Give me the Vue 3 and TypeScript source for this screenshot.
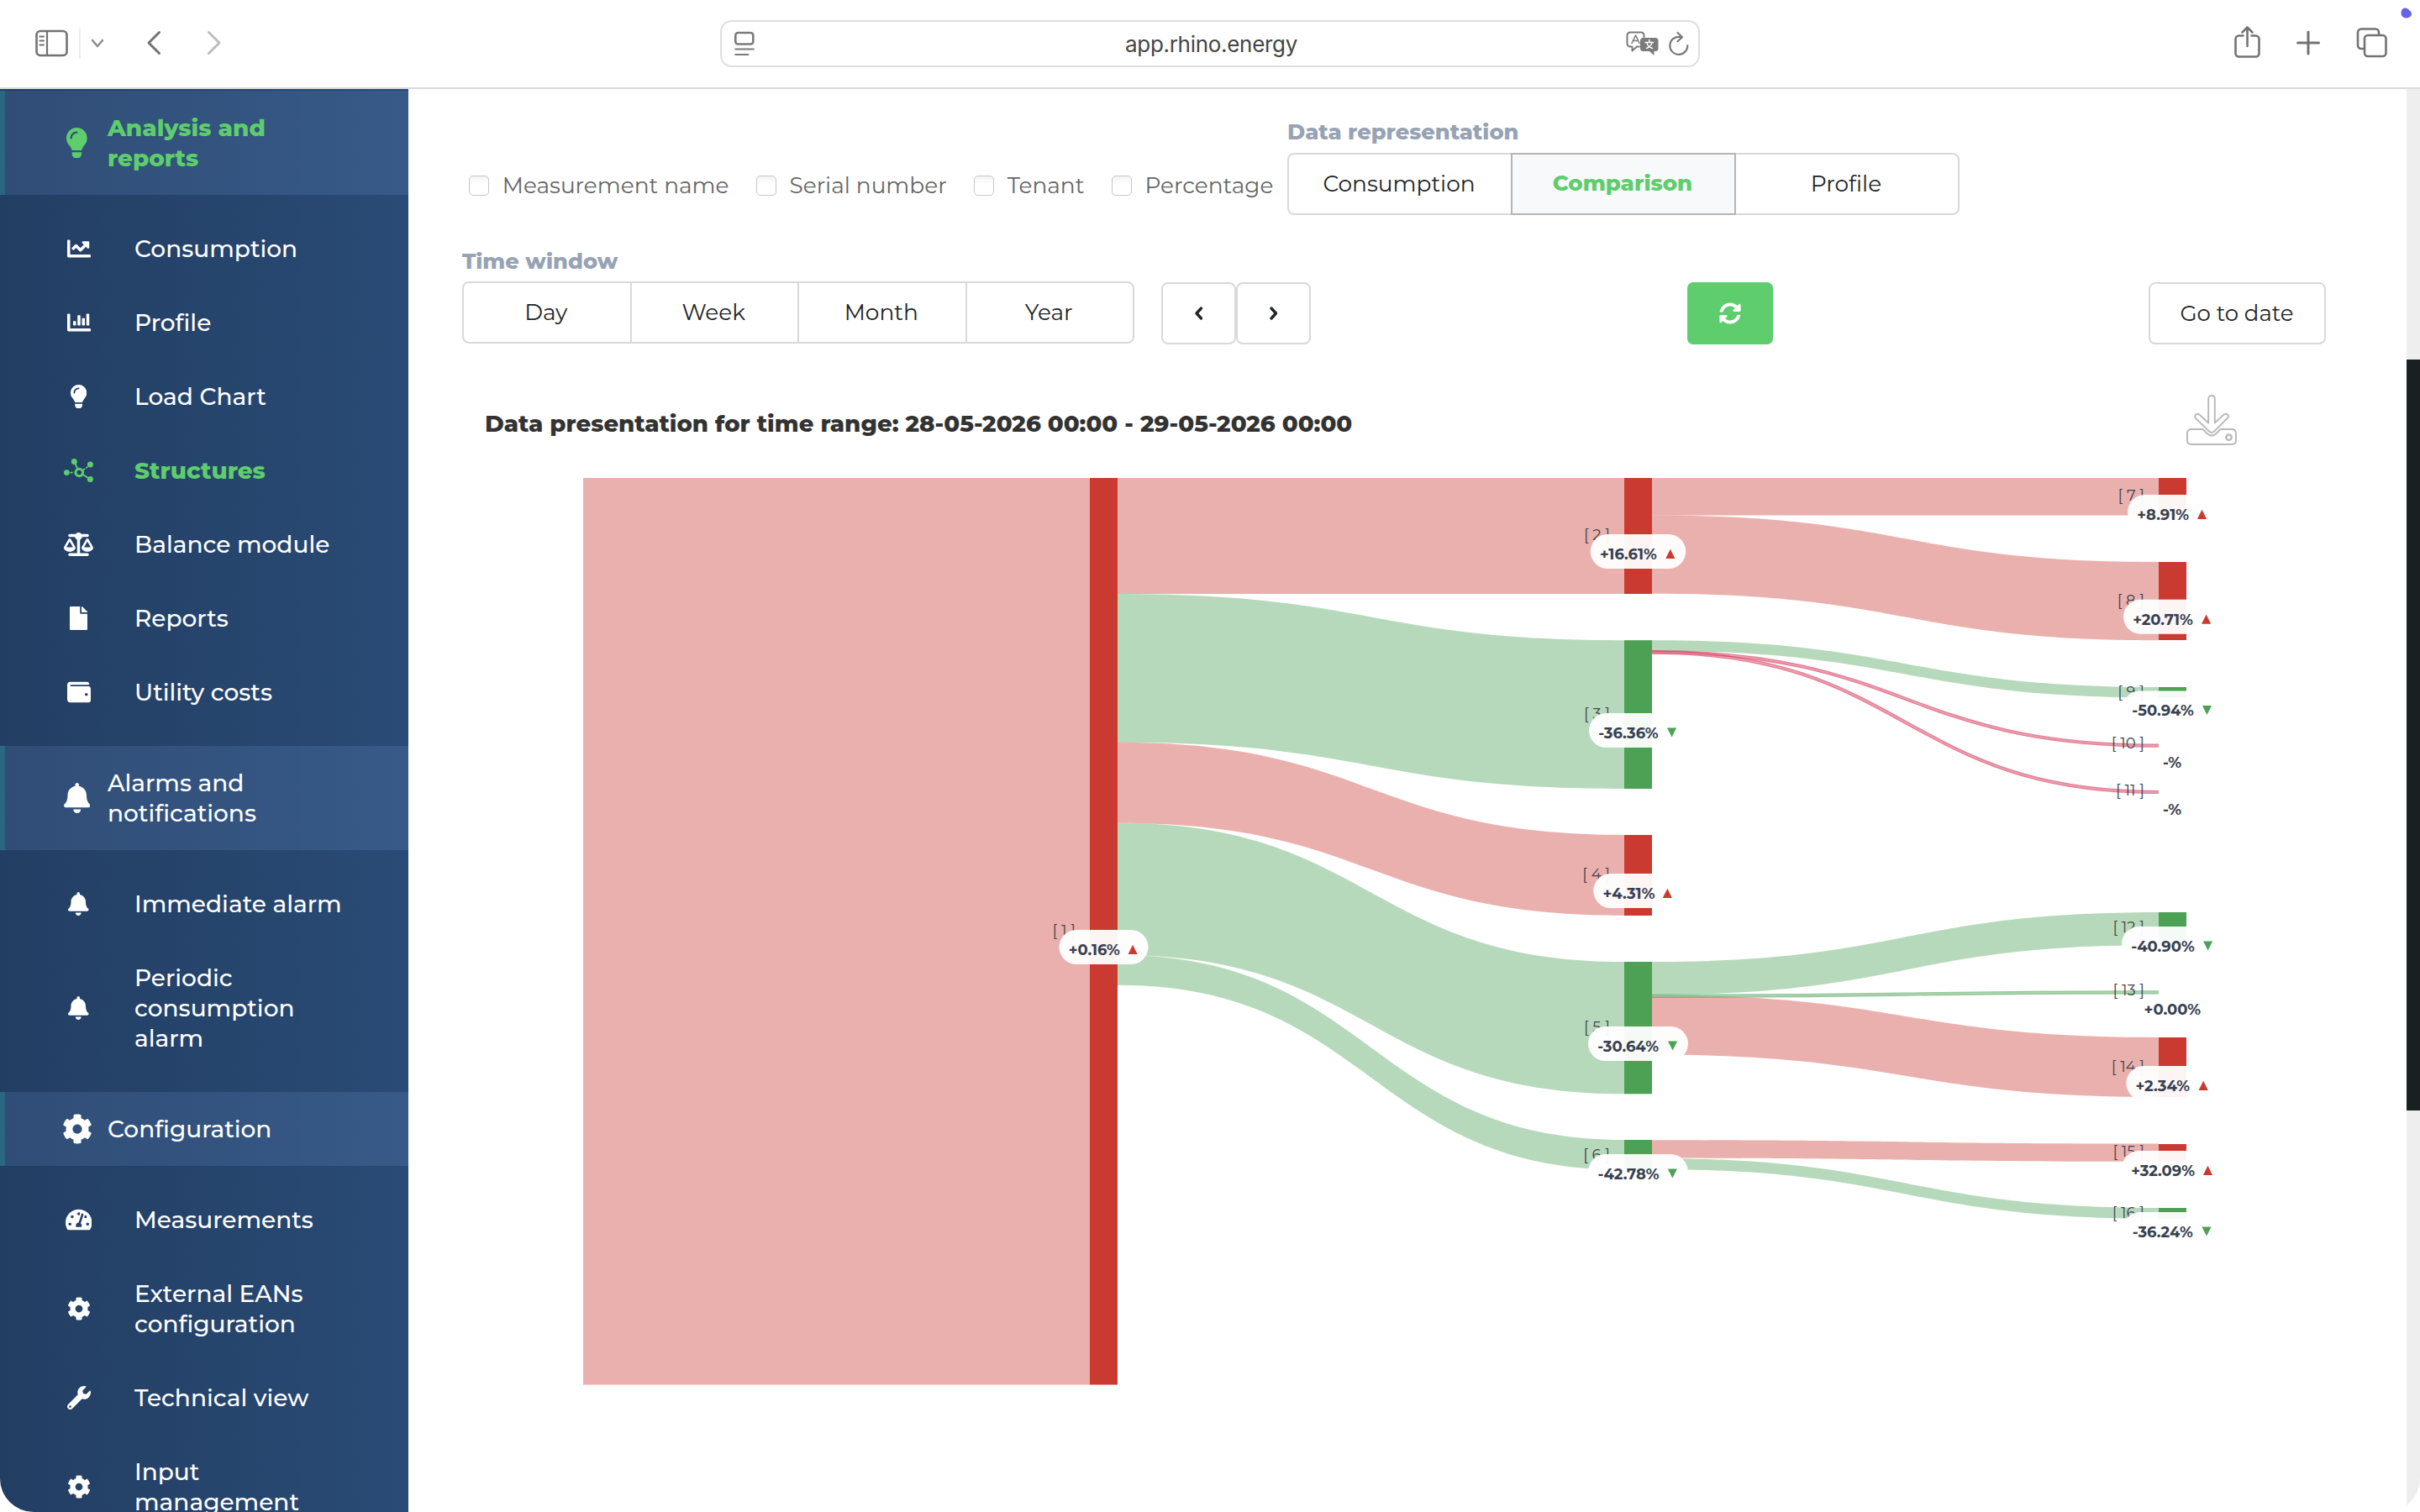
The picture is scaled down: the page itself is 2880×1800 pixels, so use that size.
<script setup lang="ts">
interface Glyph { w: number; d: string }
interface Item { icon: string; lines: string[]; active?: boolean }
interface Section { head: Item; items: Item[] }

// Spreads a label's letters so that it fills the given width.
const vFit = {
  mounted(el: HTMLElement, binding: { value: number }) {
    const n = (el.textContent ?? '').trim().length
    const w = el.getBoundingClientRect().width
    if (n > 0) el.style.letterSpacing = `${(binding.value - w) / n}px`
  },
}

const icons: Record<string, Glyph> = {
  line: { w: 512, d: 'M496 384H64V80c0-8.84-7.16-16-16-16H16C7.16 64 0 71.16 0 80v336c0 17.67 14.33 32 32 32h464c8.84 0 16-7.16 16-16v-32c0-8.84-7.16-16-16-16zM464 96H345.94c-21.38 0-32.09 25.85-16.97 40.97l32.4 32.4L288 242.75l-73.37-73.37c-12.5-12.5-32.76-12.5-45.25 0l-68.69 68.69c-6.25 6.25-6.25 16.38 0 22.63l22.62 22.62c6.25 6.25 16.38 6.25 22.63 0L192 237.25l73.37 73.37c12.5 12.5 32.76 12.5 45.25 0l96-96 32.4 32.4c15.12 15.12 40.97 4.41 40.97-16.97V112c.01-8.84-7.15-16-15.99-16z' },
  bars: { w: 512, d: 'M332.8 320h38.4c6.4 0 12.8-6.4 12.8-12.8V172.8c0-6.4-6.4-12.8-12.8-12.8h-38.4c-6.4 0-12.8 6.4-12.8 12.8v134.4c0 6.4 6.4 12.8 12.8 12.8zm96 0h38.4c6.4 0 12.8-6.4 12.8-12.8V76.8c0-6.4-6.4-12.8-12.8-12.8h-38.4c-6.4 0-12.8 6.4-12.8 12.8v230.4c0 6.4 6.4 12.8 12.8 12.8zm-288 0h38.4c6.4 0 12.8-6.4 12.8-12.8v-70.4c0-6.4-6.4-12.8-12.8-12.8h-38.4c-6.4 0-12.8 6.4-12.8 12.8v70.4c0 6.4 6.4 12.8 12.8 12.8zm96 0h38.4c6.4 0 12.8-6.4 12.8-12.8V108.8c0-6.4-6.4-12.8-12.8-12.8h-38.4c-6.4 0-12.8 6.4-12.8 12.8v198.4c0 6.4 6.4 12.8 12.8 12.8zM496 384H64V80c0-8.84-7.16-16-16-16H16C7.16 64 0 71.16 0 80v336c0 17.67 14.33 32 32 32h464c8.84 0 16-7.16 16-16v-32c0-8.84-7.16-16-16-16z' },
  bulb: { w: 352, d: 'M96.06 454.35c.01 6.29 1.87 12.45 5.36 17.69l17.09 25.69a31.99 31.99 0 0 0 26.64 14.28h61.71a31.99 31.99 0 0 0 26.64-14.28l17.09-25.69a31.989 31.989 0 0 0 5.36-17.69l.04-38.35H96.01l.05 38.35zM0 176c0 44.37 16.45 84.85 43.56 115.78 16.52 18.85 42.36 58.23 52.21 91.45.04.26.07.52.11.78h160.24c.04-.26.07-.51.11-.78 9.85-33.22 35.69-72.6 52.21-91.45C335.55 260.85 352 220.37 352 176 352 78.61 272.91-.3 175.45 0 73.44.31 0 82.97 0 176zm176-80c-44.11 0-80 35.89-80 80 0 8.84-7.16 16-16 16s-16-7.16-16-16c0-61.76 50.24-112 112-112 8.84 0 16 7.16 16 16s-7.16 16-16 16z' },
  scale: { w: 640, d: 'M384 32H512c17.7 0 32 14.3 32 32s-14.3 32-32 32H398.4c-5.2 25.8-22.9 47.1-46.4 57.3V448H512c17.7 0 32 14.3 32 32s-14.3 32-32 32H320 128c-17.7 0-32-14.3-32-32s14.3-32 32-32H288V153.3c-23.5-10.3-41.2-31.6-46.4-57.3H128c-17.7 0-32-14.3-32-32s14.3-32 32-32H256c14.6-19.4 37.8-32 64-32s49.4 12.6 64 32zm55.6 288H584.4L512 195.8 439.6 320zM512 416c-62.9 0-115.2-34-126-78.9c-2.6-11 1-22.3 6.7-32.1l95.2-163.2c5-8.6 14.2-13.8 24.1-13.8s19.1 5.3 24.1 13.8l95.2 163.2c5.7 9.8 9.3 21.1 6.7 32.1C627.2 382 574.9 416 512 416zM126.8 195.8L54.4 320H199.3L126.8 195.8zM.9 337.1c-2.6-11 1-22.3 6.7-32.1l95.2-163.2c5-8.6 14.2-13.8 24.1-13.8s19.1 5.3 24.1 13.8l95.2 163.2c5.7 9.8 9.3 21.1 6.7 32.1C242 382 189.7 416 126.8 416S11.7 382 .9 337.1z' },
  file: { w: 384, d: 'M224 136V0H24C10.7 0 0 10.7 0 24v464c0 13.3 10.7 24 24 24h336c13.3 0 24-10.7 24-24V160H248c-13.2 0-24-10.8-24-24zm160-14.1v6.1H256V0h6.1c6.4 0 12.5 2.5 17 7l97.9 98c4.5 4.5 7 10.6 7 16.9z' },
  wallet: { w: 512, d: 'M461.2 128H80c-8.84 0-16-7.16-16-16s7.16-16 16-16h384c8.84 0 16-7.16 16-16 0-26.51-21.49-48-48-48H64C28.65 32 0 60.65 0 96v320c0 35.35 28.65 64 64 64h397.2c28.02 0 50.8-21.53 50.8-48V176c0-26.47-22.78-48-50.8-48zM416 336c-17.67 0-32-14.33-32-32s14.33-32 32-32 32 14.33 32 32-14.33 32-32 32z' },
  bell: { w: 448, d: 'M224 512c35.32 0 63.97-28.65 63.97-64H160.03c0 35.35 28.65 64 63.97 64zm215.39-149.71c-19.32-20.76-55.47-51.99-55.47-154.29 0-77.7-54.48-139.9-127.94-155.16V32c0-17.67-14.32-32-31.98-32s-31.98 14.33-31.98 32v20.84C118.56 68.1 64.08 130.3 64.08 208c0 102.3-36.15 133.53-55.47 154.29-6 6.45-8.66 14.16-8.61 21.71.11 16.4 12.98 32 32.1 32h383.8c19.12 0 32-15.6 32.1-32 .05-7.55-2.61-15.27-8.61-21.71z' },
  cog: { w: 512, d: 'M487.4 315.7l-42.6-24.6c4.3-23.2 4.3-47 0-70.2l42.6-24.6c4.9-2.8 7.1-8.6 5.5-14-11.1-35.6-30-67.8-54.7-94.6-3.8-4.1-10-5.1-14.8-2.3L380.8 110c-17.9-15.4-38.5-27.3-60.8-35.1V25.8c0-5.6-3.9-10.5-9.4-11.7-36.7-8.2-74.3-7.8-109.2 0-5.5 1.2-9.4 6.1-9.4 11.7V75c-22.2 7.9-42.8 19.8-60.8 35.1L88.7 85.5c-4.9-2.8-11-1.9-14.8 2.3-24.7 26.7-43.6 58.9-54.7 94.6-1.7 5.4.6 11.2 5.5 14L67.3 221c-4.3 23.2-4.3 47 0 70.2l-42.6 24.6c-4.9 2.8-7.1 8.6-5.5 14 11.1 35.6 30 67.8 54.7 94.6 3.8 4.1 10 5.1 14.8 2.3l42.6-24.6c17.9 15.4 38.5 27.3 60.8 35.1v49.2c0 5.6 3.9 10.5 9.4 11.7 36.7 8.2 74.3 7.8 109.2 0 5.5-1.2 9.4-6.1 9.4-11.7v-49.2c22.2-7.9 42.8-19.8 60.8-35.1l42.6 24.6c4.9 2.8 11 1.9 14.8-2.3 24.7-26.7 43.6-58.9 54.7-94.6 1.5-5.5-.7-11.3-5.6-14.1zM256 336c-44.1 0-80-35.9-80-80s35.9-80 80-80 80 35.9 80 80-35.9 80-80 80z' },
  gauge: { w: 576, d: 'M288 32C128.94 32 0 160.94 0 320c0 52.8 14.25 102.26 39.06 144.8 5.61 9.62 16.3 15.2 27.44 15.2h443c11.14 0 21.83-5.58 27.44-15.2C561.75 422.26 576 372.8 576 320c0-159.06-128.94-288-288-288zm0 64c14.71 0 26.58 10.13 30.32 23.65-1.11 2.26-2.64 4.23-3.45 6.67l-9.22 27.67c-5.13 3.49-10.97 6.01-17.64 6.01-17.67 0-32-14.33-32-32S270.33 96 288 96zM96 384c-17.67 0-32-14.33-32-32s14.33-32 32-32 32 14.33 32 32-14.33 32-32 32zm48-160c-17.67 0-32-14.33-32-32s14.33-32 32-32 32 14.33 32 32-14.33 32-32 32zm246.77-72.41l-61.33 184C343.13 347.33 352 364.54 352 384c0 11.72-3.38 22.55-8.88 32H232.88c-5.5-9.45-8.88-20.28-8.88-32 0-33.94 26.5-61.43 59.9-63.59l61.34-184.01c4.17-12.56 17.73-19.45 30.36-15.17 12.57 4.19 19.35 17.79 15.17 30.36zm14.66 57.2l15.52-46.55c3.47-1.29 7.13-2.23 11.05-2.23 17.67 0 32 14.33 32 32s-14.33 32-32 32c-11.38-.01-20.89-6.28-26.57-15.22zM480 384c-17.67 0-32-14.33-32-32s14.33-32 32-32 32 14.33 32 32-14.33 32-32 32z' },
  wrench: { w: 512, d: 'M507.73 109.1c-2.24-9.03-13.54-12.09-20.12-5.51l-74.36 74.36-67.88-11.31-11.31-67.88 74.36-74.36c6.62-6.62 3.43-17.9-5.66-20.16-47.38-11.74-99.55.91-136.58 37.93-39.64 39.64-50.55 97.1-34.05 147.2L18.74 402.76c-24.99 24.99-24.99 65.51 0 90.5 24.99 24.99 65.51 24.99 90.5 0l213.21-213.21c50.12 16.71 107.47 5.68 147.37-34.22 37.07-37.07 49.7-89.32 37.91-136.73zM64 472c-13.25 0-24-10.75-24-24 0-13.26 10.75-24 24-24s24 10.74 24 24c0 13.25-10.75 24-24 24z' },
}

const item = (icon: string, ...lines: string[]): Item => ({ icon, lines })

const sections: Section[] = [
  {
    head: { ...item('bulb', 'Analysis and', 'reports'), active: true },
    items: [
      item('line', 'Consumption'),
      item('bars', 'Profile'),
      item('bulb', 'Load Chart'),
      { ...item('nodes', 'Structures'), active: true },
      item('scale', 'Balance module'),
      item('file', 'Reports'),
      item('wallet', 'Utility costs'),
    ],
  },
  {
    head: item('bell', 'Alarms and', 'notifications'),
    items: [
      item('bell', 'Immediate alarm'),
      item('bell', 'Periodic', 'consumption', 'alarm'),
    ],
  },
  {
    head: item('cog', 'Configuration'),
    items: [
      item('gauge', 'Measurements'),
      item('cog', 'External EANs', 'configuration'),
      item('wrench', 'Technical view'),
      item('cog', 'Input', 'management'),
    ],
  },
]

const checks = ['Measurement name', 'Serial number', 'Tenant', 'Percentage']
const modes = [
  { t: 'Consumption', on: false },
  { t: 'Comparison', on: true },
  { t: 'Profile', on: false },
]
const spans = ['Day', 'Week', 'Month', 'Year']

const RED = '#cb3a31'
const GREEN = '#4ca154'
const COL = [1297, 1933, 2569]
const NODE_W = 33

// Flow between two columns: source top, target top, thickness.
interface Flow { c: number; a: number; b: number; h: number; color: string }
const flows: Flow[] = [
  { c: 0, a: 569, b: 569, h: 138, color: RED },
  { c: 0, a: 707, b: 762.2, h: 176.8, color: GREEN },
  { c: 0, a: 883.8, b: 994, h: 96, color: RED },
  { c: 0, a: 979.8, b: 1145, h: 157.3, color: GREEN },
  { c: 0, a: 1137, b: 1357, h: 35.7, color: GREEN },
  { c: 1, a: 569, b: 569, h: 44.4, color: RED },
  { c: 1, a: 613.6, b: 669, h: 93.2, color: RED },
  { c: 1, a: 762.2, b: 818, h: 12.6, color: GREEN },
  { c: 1, a: 1145, b: 1086, h: 39.2, color: GREEN },
  { c: 1, a: 1184.5, b: 1235, h: 71, color: RED },
  { c: 1, a: 1357.3, b: 1361.5, h: 21.3, color: RED },
  { c: 1, a: 1379, b: 1438, h: 13, color: GREEN },
]
const threads = [
  { a: 776, b: 887.7, color: '#d22c50' },
  { a: 776.6, b: 943, color: '#d22c50' },
  { a: 1185.8, b: 1181.3, color: GREEN },
]

function flowPath(f: Flow): string {
  const x0 = COL[f.c] + NODE_W
  const x1 = COL[f.c + 1]
  const m = (x0 + x1) / 2
  return `M${x0} ${f.a}C${m} ${f.a} ${m} ${f.b} ${x1} ${f.b}V${f.b + f.h}C${m} ${f.b + f.h} ${m} ${f.a + f.h} ${x0} ${f.a + f.h}Z`
}
function threadPath(t: { a: number; b: number }): string {
  const m = (1966 + 2569) / 2
  return `M1966 ${t.a}C${m} ${t.a} ${m} ${t.b} 2569 ${t.b}`
}

interface Node { id: number; c: number; y: number; h: number; color: string; text: string; w: number; top: number; dir: number }
const n = (id: number, c: number, y: number, h: number, dir: number, text: string, w: number, top: number): Node =>
  ({ id, c, y, h, color: dir > 0 ? RED : GREEN, text, w, top, dir })
const nodes: Node[] = [
  n(1, 0, 569, 1079.5, 1, '+0.16%', 61, 1107),
  n(2, 1, 569, 138, 1, '+16.61%', 68.5, 636),
  n(3, 1, 762.2, 176.8, -1, '-36.36%', 72, 849),
  n(4, 1, 994, 96, 1, '+4.31%', 61.5, 1040),
  n(5, 1, 1145, 157.3, -1, '-30.64%', 74, 1222),
  n(6, 1, 1357, 35.7, -1, '-42.78%', 73.5, 1374),
  n(7, 2, 569, 44.4, 1, '+8.91%', 61.8, 589),
  n(8, 2, 669, 93, 1, '+20.71%', 72, 713.7),
  n(9, 2, 818, 12.6, -1, '-50.94%', 73.8, 822.5),
  n(10, 2, 0, 0, 0, '-%', 22.4, 883.7),
  n(11, 2, 0, 0, 0, '-%', 22.4, 939.7),
  n(12, 2, 1086, 39.2, -1, '-40.90%', 76, 1103),
  n(13, 2, 0, 0, 0, '+0.00%', 67, 1178),
  n(14, 2, 1235, 71, 1, '+2.34%', 65.2, 1269),
  n(15, 2, 1362, 21, 1, '+32.09%', 75.8, 1370),
  n(16, 2, 1438, 13, -1, '-36.24%', 72.8, 1442.9),
]
const cx = (d: Node) => COL[d.c] + NODE_W / 2
const pillW = (d: Node) => d.w + 45
const textX = (d: Node) => (d.dir ? cx(d) - pillW(d) / 2 + 11.6 : cx(d) - d.w / 2) - 0.4
function tri(d: Node): string {
  const x = cx(d) + pillW(d) / 2 - 24
  return d.dir > 0
    ? `M${x} ${d.top + 29}h11.2l-5.6-11.2z`
    : `M${x} ${d.top + 17.6}h11.2l-5.6 11z`
}
</script>

<template>
  <div class="window">
    <header class="toolbar">
      <svg class="ic side" width="40" height="34" viewBox="0 0 40 34"><rect x="1.5" y="2" width="36" height="29" rx="4.5" /><path d="M14 2v29M5.500 8.500h4.500M5.500 13.500h4.500M5.500 18.500h4.500" stroke-width="2.200" /></svg>
      <i class="sep"></i>
      <svg class="ic down" width="16" height="12" viewBox="0 0 16 12"><path d="M2 2l6 7 6-7" /></svg>
      <svg class="ic back" width="18" height="30" viewBox="0 0 18 30"><path d="M15.500 2.500L3 15l12.500 12.500" stroke-width="3" /></svg>
      <svg class="ic fwd" width="18" height="30" viewBox="0 0 18 30"><path d="M2.500 2.500L15 15 2.500 27.500" stroke-width="3" /></svg>
      <div class="url">
        <svg class="ic" width="24" height="30" viewBox="0 0 24 30"><rect x="1.300" y="2" width="21" height="13.500" rx="3" /><path d="M1.300 21.500h21.500M1.300 28h15" stroke-width="2.200" /></svg>
        <span v-fit="205" class="addr">app.rhino.energy</span>
        <svg class="ic" width="40" height="30" viewBox="0 0 40 30">
          <path d="M16 18.500h-3l-5.500 5v-5H5a3.500 3.500 0 0 1-3.500-3.500V5A3.500 3.500 0 0 1 5 1.500h13A3.500 3.500 0 0 1 21.500 5v2" stroke-width="2" />
          <path d="M7 14.500L11.500 5 16 14.500M8.500 11.500h6" stroke-width="1.600" />
          <path d="M20.500 8H35a3.500 3.500 0 0 1 3.500 3.500v9A3.500 3.500 0 0 1 35 24h-1.500v5L28 24h-7.500a3.500 3.500 0 0 1-3.500-3.500v-9A3.500 3.500 0 0 1 20.500 8z" fill="#7b7b7b" stroke="none" />
          <path d="M27.800 10.500v2.500M23 13.500h9.500M24.500 20.500c4-1.500 6-4 6.500-7M25 14c.5 3 3 5.500 6.500 6.500" stroke="#fff" stroke-width="1.500" />
        </svg>
        <svg class="ic reload" width="26" height="30" viewBox="0 0 26 30"><path d="M15.500 7.200A10.500 10.500 0 1 0 23.300 17M11.500 2l5.500 5.300-5.500 5" stroke-width="2.200" /></svg>
      </div>
      <svg class="ic share" width="32" height="40" viewBox="0 0 32 40"><path d="M10.500 12.500H5.500A4 4 0 0 0 1.500 16.500v17a4 4 0 0 0 4 4h20a4 4 0 0 0 4-4v-17a4 4 0 0 0-4-4h-5M15.500 25V3M9.500 8.500l6-6 6 6" /></svg>
      <svg class="ic plus" width="28" height="30" viewBox="0 0 28 30"><path d="M14 2v26M1.500 15h25" stroke-width="3" /></svg>
      <svg class="ic tabs" width="38" height="38" viewBox="0 0 38 38"><path d="M9 26H6a4 4 0 0 1-4-4V6.500a4 4 0 0 1 4-4h17a4 4 0 0 1 4 4V9" /><rect x="10" y="10" width="25.500" height="25" rx="4" /></svg>
      <svg class="dot" width="14" height="14" viewBox="0 0 14 14"><path d="M4.500.5C7 .2 9 1.500 10.500 3.500 13 5 13.500 7 12.500 9.500 11 12 8 13 5 12.300 2 11.500.3 9 .5 6 .8 3 2 1 4.500.5z" fill="#6562e6" /></svg>
    </header>

    <div class="body">
      <nav class="sidebar">
        <section v-for="s in sections" :key="s.head.lines[0]">
          <div class="head" :class="{ active: s.head.active }">
            <span class="hicon">
              <svg :width="icons[s.head.icon].w * 36 / 512" height="36" :viewBox="`0 0 ${icons[s.head.icon].w} 512`"><path :d="icons[s.head.icon].d" fill="currentColor" /></svg>
            </span>
            <div class="lines"><div v-for="l in s.head.lines" :key="l">{{ l }}</div></div>
          </div>
          <div class="items">
            <div v-for="it in s.items" :key="it.lines[0]" class="item" :class="{ active: it.active }">
              <span class="icon">
                <svg v-if="it.icon === 'nodes'" width="35" height="28" viewBox="0 0 35 28" fill="none" stroke="currentColor">
                  <circle cx="18.300" cy="16.500" r="4.300" stroke-width="3" />
                  <path d="M12.500 3.700l4 9M22 18.500l9.300 6" stroke-width="2" />
                  <path d="M7.500 16.600h5M22.700 13.800l5.500-4" stroke-width="1.800" stroke-dasharray="3 1.500" />
                  <g fill="currentColor" stroke="none"><circle cx="3.400" cy="16.600" r="3.400" /><circle cx="12.300" cy="3.500" r="3.500" /><circle cx="31.400" cy="7" r="3.500" /><circle cx="31.400" cy="24.400" r="3.500" /></g>
                </svg>
                <svg v-else :width="icons[it.icon].w * 28 / 512" height="28" :viewBox="`0 0 ${icons[it.icon].w} 512`"><path :d="icons[it.icon].d" fill="currentColor" fill-rule="evenodd" /></svg>
              </span>
              <div class="lines"><div v-for="l in it.lines" :key="l">{{ l }}</div></div>
            </div>
          </div>
        </section>
      </nav>

      <main class="main">
        <div class="row first">
          <div class="checks">
            <label v-for="c in checks" :key="c" class="check"><i class="box"></i><span>{{ c }}</span></label>
          </div>
          <div class="field">
            <div class="caption">Data representation</div>
            <div class="group">
              <button v-for="m in modes" :key="m.t" type="button" :class="{ on: m.on }">{{ m.t }}</button>
            </div>
          </div>
        </div>

        <div class="row second">
          <div class="field">
            <div class="caption">Time window</div>
            <div class="group">
              <button v-for="m in spans" :key="m" type="button">{{ m }}</button>
            </div>
          </div>
          <div class="arrows">
            <button type="button" class="btn"><svg width="12" height="18" viewBox="0 0 12 18"><path d="M8.500 3L3 9l5.500 6" /></svg></button>
            <button type="button" class="btn"><svg width="12" height="18" viewBox="0 0 12 18"><path d="M3 3l5.500 6L3 15" /></svg></button>
          </div>
          <button type="button" class="refresh"><svg width="26" height="26" viewBox="0 0 512 512"><path fill="#fff" d="M370.720 133.280C339.458 104.008 298.888 87.962 255.848 88c-77.458.068-144.328 53.178-162.791 126.850-1.344 5.363-6.122 9.150-11.651 9.150H24.103c-7.498 0-13.194-6.807-11.807-14.176C33.933 94.924 134.813 8 256 8c66.448 0 126.791 26.136 171.315 68.685L463.030 40.970C478.149 25.851 504 36.559 504 57.941V192c0 13.255-10.745 24-24 24H345.941c-21.382 0-32.090-25.851-16.971-40.971l41.750-41.749zM32 296h134.059c21.382 0 32.090 25.851 16.971 40.971l-41.750 41.750c31.262 29.273 71.835 45.319 114.876 45.280 77.418-.070 144.315-53.144 162.787-126.849 1.344-5.363 6.122-9.150 11.651-9.150h57.304c7.498 0 13.194 6.807 11.807 14.176C478.067 417.076 377.187 504 256 504c-66.448 0-126.791-26.136-171.315-68.685L48.970 471.030C33.851 486.149 8 475.441 8 454.059V320c0-13.255 10.745-24 24-24z" /></svg></button>
          <button type="button" class="btn goto">Go to date</button>
        </div>

        <div class="title">
          <h2>Data presentation for time range: 28-05-2026 00:00 - 29-05-2026 00:00</h2>
          <svg width="60" height="60" viewBox="0 0 60 60" fill="none" stroke="#b9b9b9" stroke-width="1.900" stroke-linejoin="round">
            <path d="M26.200 33.500V4.500q0-3.500 3.800-3.500t3.800 3.500v29l10.500-9.700c3.500-3 7.500 1.200 4.300 4.500L33 43.500q-3 3-6 0L11.400 28.300c-3.200-3.300.8-7.500 4.300-4.500z" />
            <path d="M19.500 41H6q-5 0-5 5v8q0 5 5 5h48q5 0 5-5v-8q0-5-5-5H40.500l-5 5q-5.500 5-11 0z" />
            <circle cx="50.500" cy="50.700" r="3.200" stroke-width="2.400" />
          </svg>
        </div>

        <svg class="sankey" width="2378" height="1270" viewBox="486 530 2378 1270">
          <rect x="694" y="569" width="603" height="1079.500" :fill="RED" fill-opacity="0.4" />
          <path v-for="(f, i) in flows" :key="i" :d="flowPath(f)" :fill="f.color" fill-opacity="0.4" />
          <g v-for="(t, i) in threads" :key="'t' + i" fill="none">
            <path :d="threadPath(t)" :stroke="t.color" stroke-opacity="0.6" stroke-width="4.200" />
            <path :d="threadPath(t)" stroke="#fff" stroke-opacity="0.25" stroke-width="1.600" />
          </g>
          <rect v-for="d in nodes" :key="'r' + d.id" :x="COL[d.c]" :y="d.y" :width="NODE_W" :height="d.h" :fill="d.color" />
          <g v-for="d in nodes" :key="'l' + d.id">
            <text class="id" :x="COL[d.c] - 17" :y="d.top + 7.300">{{ `[ ${d.id} ]` }}</text>
            <rect v-if="d.dir" :x="cx(d) - pillW(d) / 2" :y="d.top" :width="pillW(d)" height="41" rx="20.500" fill="#fff" fill-opacity="0.95" />
            <text class="pct" :x="textX(d)" :y="d.top + 29.800">{{ d.text }}</text>
            <path v-if="d.dir" :d="tri(d)" :fill="d.color" />
          </g>
        </svg>
      </main>

      <div class="scroll"><div class="thumb"></div></div>
    </div>
  </div>
</template>

<style>
body {
  background: #fff;
  overflow: hidden;
}
</style>

<style scoped>
.window {
  width: 2880px;
  height: 1800px;
  display: flex;
  flex-direction: column;
  overflow: hidden;
  border-radius: 0 0 40px 40px;
  background: #fff;
  font-family: Montserrat, Inter, "Noto Sans", sans-serif;
  font-variant-ligatures: none;
  white-space: nowrap;
}
.toolbar {
  position: relative;
  height: 106px;
  flex: none;
  box-sizing: border-box;
  border-bottom: 2px solid #dadada;
  display: flex;
  align-items: center;
}
.ic {
  flex: none;
  fill: none;
  stroke: #737373;
  stroke-width: 2.6;
  stroke-linecap: round;
  stroke-linejoin: round;
}
.side { margin-left: 42px; }
.sep {
  width: 2px;
  height: 36px;
  background: #ececec;
  margin-left: 12px;
}
.down {
  margin-left: 12px;
  stroke: #8d8d8d;
}
.back { margin-left: 50px; margin-top: -2px; }
.fwd { margin-left: 54px; margin-top: -2px; stroke: #bdbdbd; }
.url {
  margin-left: 593px;
  width: 1166px;
  height: 56px;
  flex: none;
  box-sizing: border-box;
  border: 2px solid #dfdfdf;
  border-radius: 14px;
  display: flex;
  align-items: center;
  padding: 0 10px 0 15px;
}
.url .ic { stroke: #7b7b7b; }
.addr {
  display: inline-block;
  margin: 2px auto 0 441px;
  font-family: Inter, sans-serif;
  font-size: 26px;
  line-height: 32px;
  color: #454545;
}
.url .reload { margin-left: 10px; }
.share { margin-left: 636px; margin-top: -4px; }
.plus { margin-left: 42px; margin-top: -2px; }
.tabs { margin-left: 43px; margin-top: -3px; }
.dot {
  position: absolute;
  left: 2857px;
  top: 9px;
}
.body {
  flex: 1;
  min-height: 0;
  display: flex;
}
.sidebar {
  width: 486px;
  flex: none;
  overflow: hidden;
  padding-top: 2px;
  box-sizing: border-box;
  background: linear-gradient(90deg, #233e63, #294b75);
  color: #fff;
  font-size: 28px;
  font-weight: 500;
  line-height: 36px;
}
.head {
  display: flex;
  align-items: center;
  padding: 26px 0 26px 67px;
  border-left: 6px solid #2b6780;
  background: linear-gradient(90deg, #304d76, #375a88);
}
.hicon {
  width: 37px;
  height: 36px;
  margin-right: 18px;
  display: flex;
  justify-content: center;
}
.items { padding: 20px 0; }
.item {
  display: flex;
  align-items: center;
  padding: 26px 0 26px 73px;
}
.icon {
  width: 41px;
  height: 28px;
  margin-right: 46px;
  display: flex;
  justify-content: center;
}
.head.active,
.item.active {
  color: #5ecd6d;
  font-size: 27.8px;
  font-weight: 800;
}
.main {
  width: 2378px;
  flex: none;
  color: #212529;
}
.row {
  display: flex;
  align-items: flex-end;
  padding-left: 64px;
}
.first { padding-top: 33px; }
.second { margin-top: 37px; }
.checks {
  width: 974px;
  box-sizing: border-box;
  display: flex;
  gap: 32.3px;
  height: 70px;
  align-items: center;
  padding-left: 8px;
  margin-right: 8px;
}
.check {
  display: flex;
  align-items: center;
  gap: 15.7px;
  font-size: 26.4px;
  line-height: 36px;
  color: #666;
}
.box {
  width: 24px;
  height: 24px;
  flex: none;
  box-sizing: border-box;
  border: 1.5px solid #c6c6c6;
  border-radius: 5px;
  background: linear-gradient(#f3f3f3, #fff 40%);
}
.caption {
  height: 36px;
  font-size: 25.7px;
  font-weight: 800;
  line-height: 36px;
  color: #97a3b4;
  margin-bottom: 7px;
}
.second .caption { margin-bottom: 6px; }
.second .field { margin-bottom: 1px; }
.group {
  width: 800px;
  height: 74px;
  display: flex;
}
button {
  font-family: inherit;
  font-size: 26.4px;
  color: inherit;
  padding: 0;
  box-sizing: border-box;
  background: #fff;
  border: 2px solid #d9d9d9;
  display: flex;
  align-items: center;
  justify-content: center;
}
.group button {
  flex: 1 1 0;
  margin-left: -2px;
  padding: 0 2px 2px 0;
}
.group button:first-child {
  margin-left: 0;
  border-radius: 8px 0 0 8px;
}
.group button:last-child { border-radius: 0 8px 8px 0; }
.group .on {
  position: relative;
  z-index: 1;
  border-color: #b5b5b5;
  background: #f8f9fb;
  color: #5ecd6d;
  font-size: 26px;
  font-weight: 800;
}
.arrows {
  display: flex;
  margin-left: 32px;
}
.btn {
  width: 89px;
  height: 74px;
  border-radius: 8px;
}
.btn svg {
  fill: none;
  stroke: #212529;
  stroke-width: 3.4;
  stroke-linecap: round;
  stroke-linejoin: round;
}
.refresh {
  width: 102px;
  height: 74px;
  margin-left: 448px;
  border: 0;
  border-radius: 7px;
  background: #5ecd6d;
}
.goto {
  width: 211px;
  margin-left: 447px;
  padding-right: 1px;
  font-size: 26px;
}
.title {
  margin-top: 60px;
  height: 60px;
  display: flex;
  align-items: center;
  justify-content: space-between;
  padding: 0 202px 0 91px;
}
h2 {
  margin: 8px 0 0;
  font-size: 27.6px;
  line-height: 36px;
  font-weight: 800;
  color: #333;
}
.sankey { display: block; }
.id {
  font-size: 18px;
  text-anchor: end;
  fill: #3f4552;
}
.pct {
  font-size: 18px;
  font-weight: 700;
  fill: #374151;
}
.scroll {
  width: 16px;
  background: #eee;
  padding-top: 322px;
  box-sizing: border-box;
}
.thumb {
  height: 894px;
  background: #1a1f22;
}
</style>
